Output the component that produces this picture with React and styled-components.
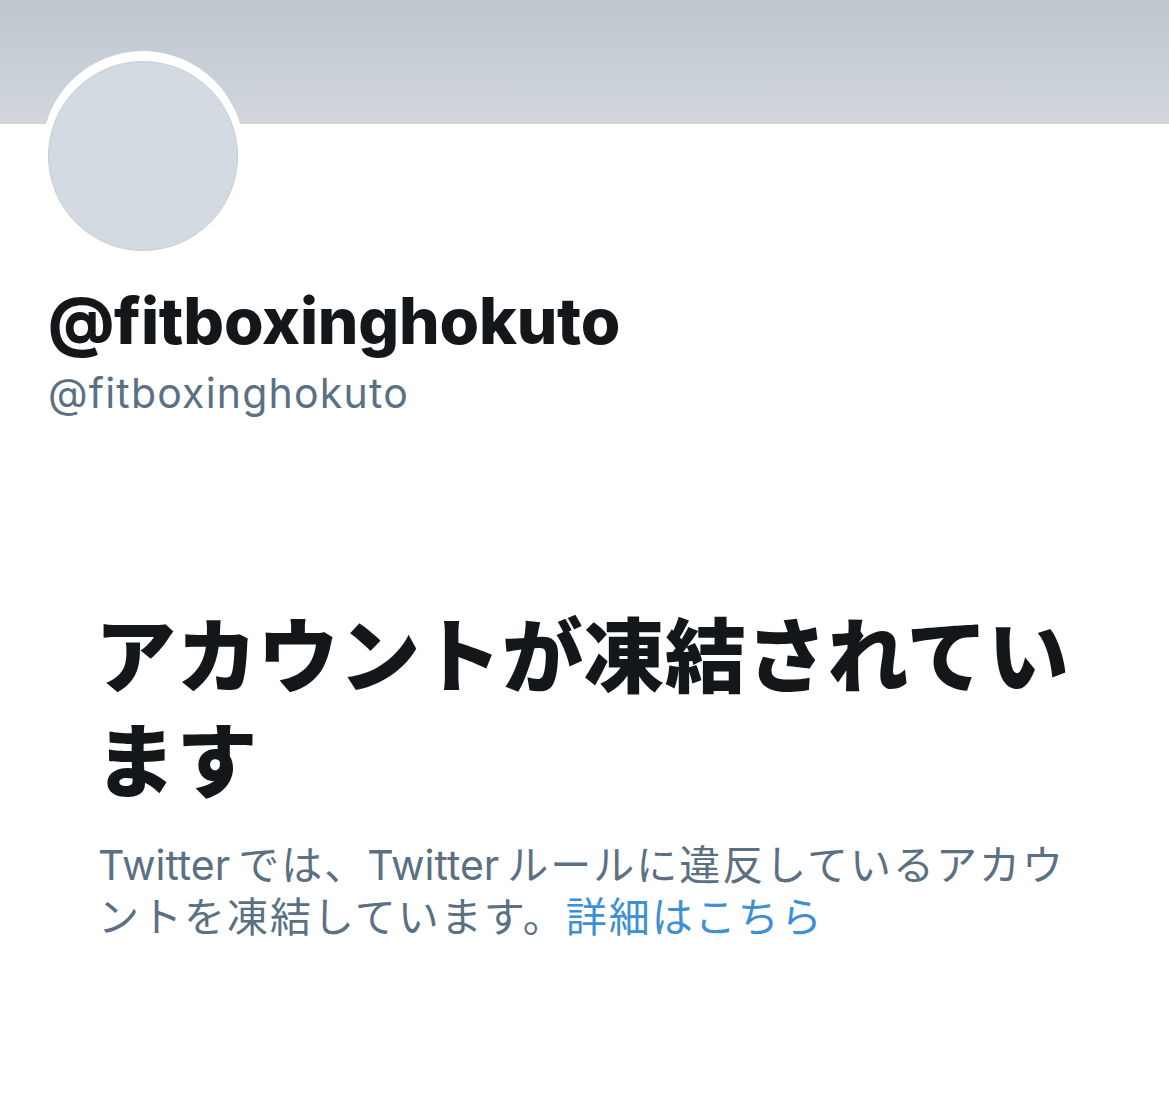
import React from "react";
import styled, { createGlobalStyle } from "styled-components";

const Global = createGlobalStyle`
  html, body { margin: 0; padding: 0; background: #ffffff; }
  body { font-family: Inter, "Noto Sans CJK JP", sans-serif; -webkit-font-smoothing: antialiased; }
`;

const Page = styled.div`
  width: 1169px;
  min-height: 1102px;
  background: #ffffff;
  display: flex;
  flex-direction: column;
`;

const Banner = styled.div`
  height: 124px;
  background: linear-gradient(180deg, #bfc6ce 0%, #d0d6dc 100%);
`;

const Header = styled.div`
  display: flex;
  flex-direction: column;
  padding: 0 0 0 42px;
  margin-top: -73px;
`;

const AvatarRing = styled.div`
  width: 202px;
  height: 202px;
  border-radius: 50%;
  background: #ffffff;
  box-sizing: border-box;
  padding: 10px 0 0 6px;
`;

const AvatarInner = styled.div`
  width: 190px;
  height: 190px;
  border-radius: 50%;
  box-sizing: border-box;
  background: #d3dae1;
  border: 1px solid #c6cdd4;
`;

const Names = styled.div`
  display: flex;
  flex-direction: column;
  padding-left: 6px;
  margin-top: 30px;
`;

const DisplayName = styled.div`
  font-family: Inter, sans-serif;
  font-weight: 800;
  font-size: 64px;
  line-height: 76px;
  letter-spacing: -0.2px;
  color: #14171a;
`;

const Handle = styled.div`
  margin-top: 10px;
  font-family: Inter, sans-serif;
  font-weight: 400;
  font-size: 41px;
  line-height: 48px;
  color: #5b7083;
  letter-spacing: 1.2px;
`;

const Notice = styled.div`
  display: flex;
  flex-direction: column;
  padding: 0 60px 0 98px;
  margin-top: 181px;
`;

const Title = styled.h1`
  margin: 0;
  font-family: "Noto Sans CJK JP", sans-serif;
  font-weight: 900;
  font-size: 81px;
  line-height: 105px;
  letter-spacing: 0.4px;
  color: #14171a;
  width: 985px;
  margin-left: -3px;
`;

const Body = styled.p`
  margin: 31px 0 0;
  font-family: Inter, "Noto Sans CJK JP", sans-serif;
  font-weight: 400;
  font-size: 41px;
  line-height: 52px;
  letter-spacing: 2px;
  color: #5b7083;
  width: 985px;
`;

const Latin = styled.span`
  letter-spacing: 0;
  margin-right: 8px;
`;

const Link = styled.a`
  color: #3d8fd6;
  text-decoration: none;
`;

export default function App() {
  return (
    <Page>
      <Global />
      <Banner />
      <Header>
        <AvatarRing>
          <AvatarInner />
        </AvatarRing>
        <Names>
          <DisplayName>@fitboxinghokuto</DisplayName>
          <Handle>@fitboxinghokuto</Handle>
        </Names>
      </Header>
      <Notice>
        <Title>アカウントが凍結されています</Title>
        <Body>
          <Latin>Twitter</Latin>では、<Latin>Twitter</Latin>ルールに違反しているアカウントを凍結しています。<Link href="#">詳細はこちら</Link>
        </Body>
      </Notice>
    </Page>
  );
}
